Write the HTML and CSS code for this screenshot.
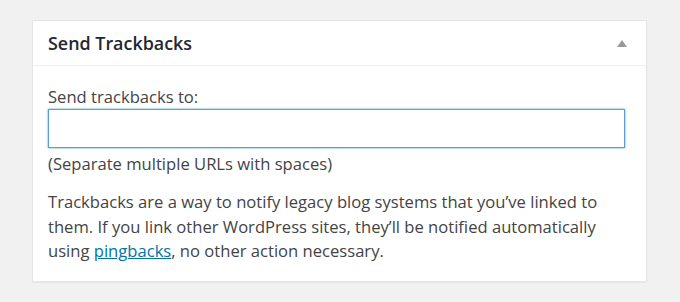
FILE: index.html
```html
<!DOCTYPE html>
<html>
<head>
<meta charset="utf-8">
<link rel="stylesheet" href="styles.css">
</head>
<body>
<div class="postbox">
  <div class="hndle">
    <h2 class="title">Send Trackbacks</h2>
    <span class="toggle"></span>
  </div>
  <div class="inside">
    <label class="label" for="tb">Send trackbacks to:</label>
    <input class="field" id="tb" type="text">
    <div class="hint">(Separate multiple URLs with spaces)</div>
    <p class="desc">Trackbacks are a way to notify legacy blog systems that you’ve linked to them. If you link other WordPress sites, they’ll be notified automatically using <a href="#">pingbacks</a>, no other action necessary.</p>
  </div>
</div>
</body>
</html>
```
FILE: styles.css
```css
html, body {
  margin: 0;
  padding: 0;
}
body {
  background: #f1f1f1;
  font-family: "Open Sans", "Liberation Sans", sans-serif;
  color: #444;
  padding: 20px 0 0 32px;
  height: 302px;
  box-sizing: border-box;
}
.postbox {
  width: 615px;
  height: 262px;
  box-sizing: border-box;
  background: #fff;
  border: 1px solid #e5e5e5;
  box-shadow: 0 1px 1px rgba(0,0,0,0.04);
}
.hndle {
  height: 45px;
  border-bottom: 1px solid #eee;
  display: flex;
  align-items: center;
  justify-content: space-between;
  padding: 0 19px 0 15px;
  box-sizing: border-box;
}
.title {
  margin: 0;
  font-size: 17.9px;
  font-weight: 600;
  color: #23282d;
}
.toggle {
  width: 0;
  height: 0;
  border-left: 5px solid transparent;
  border-right: 5px solid transparent;
  border-bottom: 7px solid #999;
}
.inside {
  padding: 19px 20px 0 15px;
  font-size: 16.6px;
  line-height: 24px;
}
.label {
  display: block;
}
.field {
  display: block;
  width: 577px;
  height: 39px;
  margin: 0;
  box-sizing: border-box;
  border: 1px solid #5b9dd9;
  box-shadow: 0 0 2px rgba(30,140,190,0.8);
  outline: none;
  background: #fff;
}
.hint {
  margin-top: 4px;
}
.desc {
  margin: 14px 0 0;
  line-height: 24.5px;
}
.desc a {
  color: #0073aa;
  text-decoration: underline;
}
```
